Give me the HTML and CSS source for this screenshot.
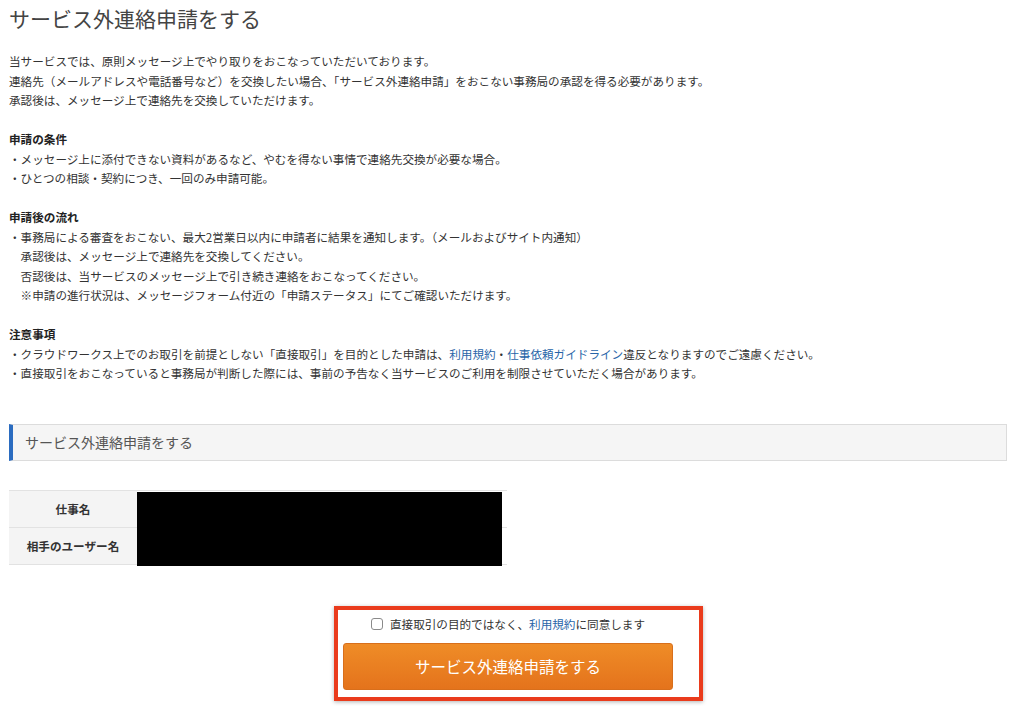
FILE: index.html
```html
<!DOCTYPE html>
<html lang="ja">
<head>
    <meta charset="UTF-8">
    <meta name="viewport" content="width=device-width, initial-scale=1.0">
    <title>サービス外連絡申請をする</title>
    <link rel="stylesheet" href="styles.css">
</head>
<body>
    <div class="container">
        <h1 class="page-title">サービス外連絡申請をする</h1>

        <div class="notes">
            <p>
                当サービスでは、原則メッセージ上でやり取りをおこなっていただいております。<br>
                連絡先（メールアドレスや電話番号など）を交換したい場合、「サービス外連絡申請」をおこない事務局の承認を得る必要があります。<br>
                承認後は、メッセージ上で連絡先を交換していただけます。
            </p>

            <p>
                <strong>申請の条件</strong><br>
                ・メッセージ上に添付できない資料があるなど、やむを得ない事情で連絡先交換が必要な場合。<br>
                ・ひとつの相談・契約につき、一回のみ申請可能。
            </p>

            <p>
                <strong>申請後の流れ</strong><br>
                ・事務局による審査をおこない、最大2営業日以内に申請者に結果を通知します。（メールおよびサイト内通知）<br>
                <span class="indent">承認後は、メッセージ上で連絡先を交換してください。</span><br>
                <span class="indent">否認後は、当サービスのメッセージ上で引き続き連絡をおこなってください。</span><br>
                <span class="indent">※申請の進行状況は、メッセージフォーム付近の「申請ステータス」にてご確認いただけます。</span>
            </p>

            <p>
                <strong>注意事項</strong><br>
                ・クラウドワークス上でのお取引を前提としない「直接取引」を目的とした申請は、<a href="#">利用規約</a>・<a href="#">仕事依頼ガイドライン</a>違反となりますのでご遠慮ください。<br>
                ・直接取引をおこなっていると事務局が判断した際には、事前の予告なく当サービスのご利用を制限させていただく場合があります。
            </p>
        </div>

        <h2 class="section-title">サービス外連絡申請をする</h2>

        <div class="job-info">
            <table class="info-table">
                <tr>
                    <th>仕事名</th>
                    <td></td>
                </tr>
                <tr>
                    <th>相手のユーザー名</th>
                    <td></td>
                </tr>
            </table>
            <div class="redacted"></div>
        </div>

        <form class="apply-form" onsubmit="event.preventDefault()">
            <label class="agree">
                <input type="checkbox" name="agree">
                直接取引の目的ではなく、<a href="#">利用規約</a>に同意します
            </label>
            <button type="submit" class="apply-button">サービス外連絡申請をする</button>
            <div class="highlight"></div>
        </form>
    </div>
</body>
</html>
```

FILE: styles.css
```css
body {
    font-family: "Noto Sans CJK JP", "Noto Sans", sans-serif;
    color: #333;
    background-color: #fff;
    margin: 0;
    padding: 0 0 0 9px;
}
.container {
    width: 998px;
    padding-bottom: 20px;
}
.page-title {
    margin: 0;
    padding-top: 4px;
    font-size: 21px;
    line-height: 28px;
    font-weight: normal;
    color: #444;
}
.notes {
    margin-top: 20px;
    font-size: 11.6px;
    line-height: 19.5px;
}
.notes p {
    margin: 0 0 19.5px;
}
.notes p:last-child {
    margin-bottom: 0;
}
.notes strong {
    color: #222;
}
.indent {
    padding-left: 11.6px;
}
a {
    color: #2865a8;
    text-decoration: none;
}
.section-title {
    margin: 40px 0 0;
    height: 35px;
    padding-left: 12px;
    border: 1px solid #dcdcdc;
    border-left: 4px solid #2b6cc0;
    background-color: #f5f5f5;
    font-size: 14px;
    line-height: 35px;
    font-weight: normal;
    color: #555;
}
.job-info {
    position: relative;
    width: 498px;
    margin-top: 29px;
}
.info-table {
    width: 100%;
    border-collapse: collapse;
    font-size: 11.6px;
}
.info-table th {
    width: 128px;
    height: 36px;
    padding: 0;
    background-color: #f4f4f4;
    border-top: 1px solid #e2e2e2;
    border-bottom: 1px solid #e2e2e2;
    color: #333;
    text-align: center;
}
.info-table td {
    border-top: 1px solid #e2e2e2;
    border-bottom: 1px solid #e2e2e2;
}
.redacted {
    position: absolute;
    left: 128px;
    top: 2px;
    width: 365px;
    height: 74px;
    background-color: #000;
}
.apply-form {
    position: relative;
    width: 330px;
    margin: 49px auto 0;
    display: flex;
    flex-direction: column;
    align-items: center;
}
.agree {
    display: flex;
    align-items: center;
    height: 20px;
    font-size: 11.6px;
    color: #333;
}
.agree input {
    appearance: none;
    width: 12px;
    height: 12px;
    margin: 0 7px 0 0;
    border: 1px solid #8a8a8a;
    border-radius: 3px;
    background-color: #fff;
}
.apply-button {
    margin-top: 9px;
    width: 330px;
    height: 47px;
    border: 1px solid #d86f1c;
    border-radius: 3px;
    background: linear-gradient(#ef8c27, #e4731c);
    color: #fff;
    font-family: inherit;
    font-size: 15.5px;
    cursor: pointer;
}
.highlight {
    position: absolute;
    left: -9px;
    top: -8px;
    right: -30px;
    bottom: -11px;
    border: 4px solid #ea3b1c;
    box-shadow: 0 1px 4px rgba(0, 0, 0, 0.3);
    pointer-events: none;
}
```
